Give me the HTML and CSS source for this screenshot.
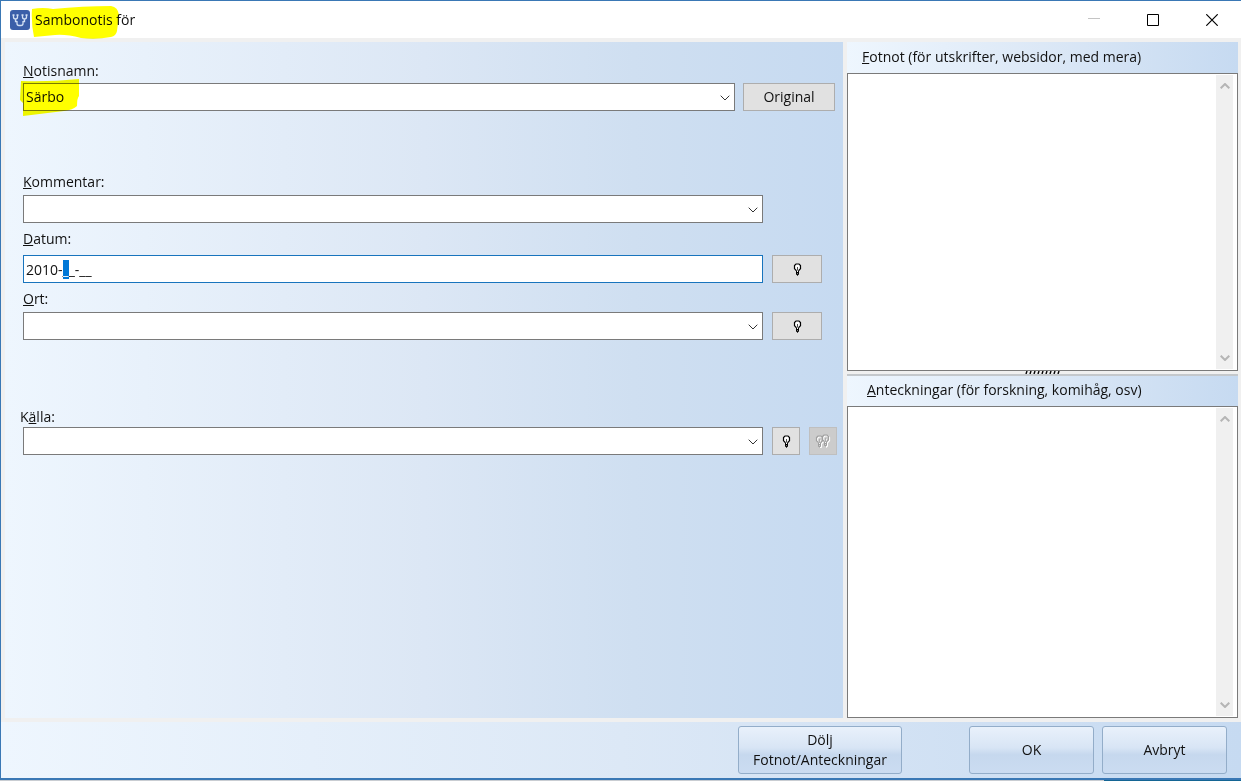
FILE: index.html
```html
<!DOCTYPE html>
<html lang="sv">
<head>
    <meta charset="UTF-8">
    <meta name="viewport" content="width=device-width, initial-scale=1.0">
    <title>Sambonotis för</title>
    <link rel="stylesheet" href="styles.css">
</head>
<body>
    <!-- shared icons -->
    <svg class="icons">
        <symbol id="chevron" viewBox="0 0 10 6"><path d="M0.7 0.7 5 5 9.3 0.7" /></symbol>
        <symbol id="bulb" viewBox="0 0 9 13">
            <path d="M3 8V7.2L1.5 5.7V2.5L3 1H6L7.5 2.5V5.7L6 7.2V8" stroke-width="1.2" />
            <path d="M4.5 4V8" stroke-width="0.7" />
            <path d="M3.5 7.5V11.5H5.5V7.5M4.5 10.5V12.7M3.5 9.5H5.5" />
        </symbol>
    </svg>

    <form class="window">
        <header class="titlebar">
            <svg class="logo" viewBox="0 0 20 20">
                <rect width="20" height="20" rx="3" fill="#3b5fa9" />
                <path d="M3.5 5V7Q3.5 9 5.5 9T7.5 7V5M5.5 9V11.5H7M12.5 5V7Q12.5 9 14.5 9T16.5 7V5M14.5 9V11.5H13M7 11V13.5Q7 15.5 9 15.5H11Q13 15.5 13 13.5V11" fill="none" stroke="#d3e0f4" stroke-width="1.3" />
                <path d="M2.5 5H4.5M6.5 5H8.5M11.5 5H13.5M15.5 5H17.5" stroke="#d3e0f4" stroke-width="1.5" />
            </svg>
            <h1 class="title">
                <svg class="marker marker-title" viewBox="0 0 88 34">
                    <path d="M1 4Q12 2 22 4Q52 1 80 1Q87 2 88 10L86 26Q85 31 80 32Q65 35 50 33Q35 29 24 30L3 32Q0 18 1 4Z" />
                </svg>
                Sambonotis för
            </h1>
            <div class="window-buttons">
                <button type="button" aria-label="Minimera" disabled><svg viewBox="0 0 12 12"><path d="M0 4.5H12" stroke="#c4c4c4" /></svg></button>
                <button type="button" aria-label="Maximera"><svg viewBox="0 0 12 12"><path d="M0.5 0.5H11.5V11.5H0.5Z" /></svg></button>
                <button type="button" aria-label="Stäng"><svg viewBox="0 0 12 12"><path d="M0.3 0.3 11.7 11.7M11.7 0.3 0.3 11.7" stroke-width="1.2" /></svg></button>
            </div>
        </header>

        <main class="content">
            <section class="fields">
                <div class="field field-name">
                    <label for="notisnamn"><u>N</u>otisnamn:</label>
                    <div class="row row-name">
                        <div class="combo">
                            <select id="notisnamn"><option>Särbo</option></select>
                            <svg class="arrow"><use href="#chevron" /></svg>
                            <svg class="marker marker-name" viewBox="0 0 60 38">
                                <path d="M1 2Q30 3 59 0L59 17Q57 19 57 27Q53 31 44 32L3 37L3 24L0 21Z" />
                            </svg>
                        </div>
                        <button type="button" class="btn btn-original">Original</button>
                    </div>
                </div>

                <div class="field field-comment">
                    <label for="kommentar"><u>K</u>ommentar:</label>
                    <div class="row">
                        <div class="combo">
                            <select id="kommentar"><option></option></select>
                            <svg class="arrow"><use href="#chevron" /></svg>
                        </div>
                        <div class="side"></div>
                    </div>
                </div>

                <div class="field field-date">
                    <label for="datum"><u>D</u>atum:</label>
                    <div class="row">
                        <input type="text" id="datum" value="2010-__-__" autofocus>
                        <div class="side">
                            <button type="button" class="btn btn-wide" aria-label="Förslag datum"><svg class="bulb"><use href="#bulb" /></svg></button>
                        </div>
                    </div>
                </div>

                <div class="field field-place">
                    <label for="ort"><u>O</u>rt:</label>
                    <div class="row">
                        <div class="combo">
                            <select id="ort"><option></option></select>
                            <svg class="arrow"><use href="#chevron" /></svg>
                        </div>
                        <div class="side">
                            <button type="button" class="btn btn-wide" aria-label="Förslag ort"><svg class="bulb"><use href="#bulb" /></svg></button>
                        </div>
                    </div>
                </div>

                <div class="field field-source">
                    <label for="kalla">K<u>ä</u>lla:</label>
                    <div class="row">
                        <div class="combo">
                            <select id="kalla"><option></option></select>
                            <svg class="arrow"><use href="#chevron" /></svg>
                        </div>
                        <div class="side">
                            <button type="button" class="btn" aria-label="Förslag källa"><svg class="bulb"><use href="#bulb" /></svg></button>
                            <button type="button" class="btn" aria-label="Flera källor" disabled>
                                <svg class="bulbs" viewBox="0 0 16 14">
                                    <use class="shade" href="#bulb" x="1" y="2" width="9" height="13" />
                                    <use class="shade" href="#bulb" x="7" y="1" width="9" height="13" />
                                    <use href="#bulb" x="0" y="1" width="9" height="13" />
                                    <use href="#bulb" x="6" y="0" width="9" height="13" />
                                </svg>
                            </button>
                        </div>
                    </div>
                </div>
            </section>

            <section class="notes">
                <label class="notes-title" for="fotnot"><span><u>F</u>otnot (för utskrifter, websidor, med mera)</span></label>
                <div class="notes-box notes-top">
                    <textarea id="fotnot"></textarea>
                    <div class="scrollbar">
                        <svg class="up"><use href="#chevron" /></svg>
                        <svg><use href="#chevron" /></svg>
                    </div>
                </div>
                <div class="splitter">
                    <svg viewBox="0 0 36 3"><path d="M1 3 2 0M5 3 6 0M9 3 10 0M13 3 14 0M17 3 18 0M21 3 22 0M25 3 26 0M29 3 30 0M33 3 34 0" /></svg>
                </div>
                <label class="notes-title notes-title-second" for="anteckningar"><span><u>A</u>nteckningar (för forskning, komihåg, osv)</span></label>
                <div class="notes-box notes-bottom">
                    <textarea id="anteckningar"></textarea>
                    <div class="scrollbar">
                        <svg class="up"><use href="#chevron" /></svg>
                        <svg><use href="#chevron" /></svg>
                    </div>
                </div>
            </section>
        </main>

        <footer class="footer">
            <button type="button" class="big-btn btn-hide">Dölj<br>Fotnot/Anteckningar</button>
            <button type="submit" class="big-btn">OK</button>
            <button type="button" class="big-btn">Avbryt</button>
        </footer>
    </form>
    <div class="desktop"></div>

    <script>
        // first month digit is selected when the dialog opens
        const datum = document.getElementById("datum");
        datum.focus();
        datum.setSelectionRange(5, 6);
    </script>
</body>
</html>
```

FILE: styles.css
```css
* {
    box-sizing: border-box;
}
body {
    margin: 0;
    min-height: 100vh;
    display: flex;
    flex-direction: column;
    font-family: "Open Sans", "Noto Sans", sans-serif;
    font-size: 14px;
    line-height: 20px;
    color: #111;
    background: #f0f0f0;
}
button, input, select, textarea {
    font: inherit;
    color: inherit;
}
svg {
    fill: none;
    stroke: #000;
    display: block;
}
.icons {
    position: absolute;
    width: 0;
    height: 0;
}
.window {
    flex: 1;
    display: flex;
    flex-direction: column;
    border: 1px solid #3a78b5;
    border-right: 0;
    border-bottom-width: 2px;
}

/* title bar */
.titlebar {
    height: 37px;
    display: flex;
    align-items: center;
    padding-left: 9px;
    background: #fff;
}
.logo {
    width: 20px;
    height: 20px;
    stroke: none;
}
.title {
    position: relative;
    margin: 0 0 0 5px;
    font-size: 14px;
    font-weight: normal;
}
.marker {
    position: absolute;
    fill: #ff0;
    stroke: none;
    mix-blend-mode: multiply;
    pointer-events: none;
}
.marker-title {
    left: -4px;
    top: -5px;
    width: 88px;
    height: 34px;
}
.marker-name {
    left: -3px;
    top: -4px;
    width: 60px;
    height: 38px;
}
.window-buttons {
    margin-left: auto;
    display: flex;
}
.window-buttons button {
    width: 59px;
    height: 36px;
    padding: 0;
    border: 0;
    background: none;
}
.window-buttons svg {
    width: 12px;
    height: 12px;
    margin: auto;
}

/* content */
.content {
    flex: 1;
    display: grid;
    grid-template-columns: 1fr 391px;
    gap: 4px;
    padding: 4px 3px 4px 4px;
}
.fields {
    padding: 19px 6px 20px 18px;
    background: linear-gradient(to right, #eef6fe, #dce7f5 50%, #cfdff1 75%, #c6daf1);
}
.field label {
    display: block;
}
.field-name label {
    margin-bottom: 2px;
}
.field-comment {
    margin-top: 61px;
}
.field-comment label,
.field-place label {
    margin-bottom: 3px;
}
.field-date label {
    margin-bottom: 6px;
}
.field-date,
.field-place {
    margin-top: 6px;
}
.field-source {
    margin-top: 67px;
}
.field-source label {
    margin-left: -3px;
}
.row {
    display: flex;
    gap: 9px;
}
.row-name {
    gap: 8px;
    margin-right: 2px;
}
.combo {
    position: relative;
    flex: 1;
}
.combo select,
.row input {
    display: block;
    width: 100%;
    height: 28px;
    padding: 0 2px;
    border: 1px solid #7a7a7a;
    border-radius: 0;
    background: #fff;
    appearance: none;
    outline: none;
}
.row input {
    flex: 1;
    width: auto;
    border-color: #1874bd;
}
.row input::selection {
    background: #0078d7;
    color: #fff;
}
.arrow {
    position: absolute;
    right: 5px;
    top: 12px;
    width: 10px;
    height: 6px;
    stroke: #333;
    pointer-events: none;
}
.side {
    width: 65px;
    display: flex;
    gap: 9px;
}
.btn {
    width: 28px;
    height: 28px;
    padding: 0;
    border: 1px solid #adadad;
    background: #e1e1e1;
}
.btn:disabled {
    border-color: #bfbfbf;
    background: #ccc;
}
.btn-wide {
    width: 50px;
}
.btn-original {
    width: 92px;
}
.bulb {
    width: 9px;
    height: 13px;
    margin: auto;
}
.bulb use {
    fill: #fff;
}
.bulbs {
    width: 16px;
    height: 14px;
    margin: auto;
    stroke: #a0a0a0;
}
.bulbs .shade {
    stroke: #fff;
}

/* notes */
.notes {
    display: flex;
    flex-direction: column;
}
.notes-title {
    height: 31px;
    padding: 5px 15px;
    background: linear-gradient(to right, #eef6fe, #dce8f6 50%, #c6daf1);
}
.notes-title-second {
    height: 30px;
    padding: 4px 20px;
}
.notes-box {
    display: flex;
    border: 1px solid #7a7a7a;
    background: #fff;
}
.notes-top {
    flex: 22 0 0;
}
.notes-bottom {
    flex: 23 0 0;
}
.notes-box textarea {
    flex: 1;
    padding: 4px;
    border: 0;
    outline: none;
    resize: none;
    background: none;
}
.scrollbar {
    width: 17px;
    margin: 1px 4px 1px 0;
    padding: 8px 4px;
    display: flex;
    flex-direction: column;
    justify-content: space-between;
    background: #f0f0f0;
}
.scrollbar svg {
    width: 10px;
    height: 6px;
    stroke: #b5b5b5;
    stroke-width: 2;
}
.scrollbar .up {
    transform: rotate(180deg);
}
.splitter {
    height: 5px;
    border-bottom: 2px solid #c4c8cc;
}
.splitter svg {
    width: 36px;
    height: 3px;
    margin: auto;
    stroke-width: 1.4;
}

/* footer */
.footer {
    display: flex;
    justify-content: flex-end;
    gap: 8px;
    padding: 4px 14px;
    background: linear-gradient(to right, #eef6fe, #dce8f6 50%, #c6daf1);
}
.big-btn {
    width: 125px;
    height: 48px;
    padding: 0;
    border: 1px solid #93adc9;
    border-radius: 3px;
    background: linear-gradient(#e9f1fb, #d8e5f5 45%, #c6d8ee 60%, #cbdcf1);
}
.btn-hide {
    width: 164px;
    margin-right: 59px;
}
.desktop {
    height: 1px;
    background: linear-gradient(to right, #c9cdd2 89%, #146594 89%);
}
```
